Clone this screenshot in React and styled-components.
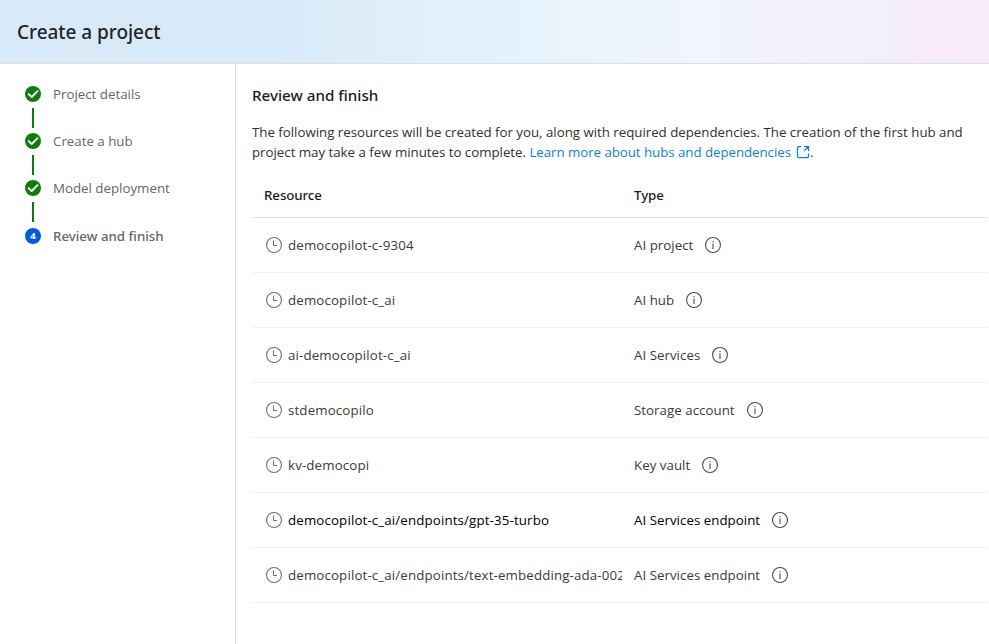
import React from "react";
import styled, { createGlobalStyle } from "styled-components";

const GlobalStyle = createGlobalStyle`
  *, *::before, *::after { box-sizing: border-box; }
  body { margin: 0; background: #fff; overflow: hidden; }
`;

const Page = styled.div`
  display: flex;
  flex-direction: column;
  height: 100vh;
  font-family: "Open Sans", "Noto Sans", sans-serif;
  font-size: 13.3px;
  line-height: 20px;
  color: #323130;
`;

const Header = styled.header`
  display: flex;
  align-items: center;
  flex: none;
  height: 64px;
  padding: 0 17px;
  border-bottom: 1px solid #dcdfe3;
  background: linear-gradient(
    90deg,
    #d8eaf8 0%,
    #d7eaf9 27%,
    #e0eef9 40%,
    #e4f2fb 50%,
    #ebf4fd 60%,
    #f1f6fd 70%,
    #f3f3fd 77%,
    #f4f1fb 83%,
    #f3eff8 91%,
    #f8ebf9 95%,
    #f8eaf9 100%
  );
`;

const Title = styled.h1`
  margin: 0;
  font: 500 19px/28px "Noto Sans", sans-serif;
  letter-spacing: -0.04px;
  color: #242424;
`;

const Body = styled.div`
  display: flex;
  flex: 1;
  min-height: 0;
`;

const Sidebar = styled.nav`
  flex: none;
  width: 236px;
  padding: 20px 0 0 25px;
  border-right: 1px solid #dfdfdf;
`;

const Step = styled.div`
  display: flex;
  align-items: center;
  gap: 12px;
  height: 20px;
  color: #666;
  font-family: ${(p) => (p.$current ? '"Noto Sans", sans-serif' : "inherit")};
  font-weight: ${(p) => (p.$current ? 500 : 400)};
`;

const Connector = styled.div`
  width: 2px;
  height: 20px;
  margin: ${(p) => (p.$last ? "4px 0 4px 7px" : "4px 0 3px 7px")};
  background: #107c10;
`;

const StepNumber = styled.span`
  display: grid;
  place-items: center;
  width: 16px;
  height: 16px;
  border-radius: 50%;
  background: #015cda;
  color: #fff;
  font: 700 9.5px/16px "Open Sans", sans-serif;
`;

const Main = styled.main`
  flex: 1;
  min-width: 0;
  padding: 20px 0 0 16px;
`;

const SectionTitle = styled.h2`
  margin: 0 0 16px;
  font: 500 15.2px/22px "Noto Sans", sans-serif;
  color: #1b1b1b;
`;

const Intro = styled.p`
  width: 725px;
  margin: 0;
  letter-spacing: -0.02px;
`;

const Link = styled.a`
  color: #0f7fd6;
  letter-spacing: -0.05px;
  text-decoration: none;
`;

const LinkIcon = styled.svg`
  margin-left: 5px;
  vertical-align: -2px;
`;

const Table = styled.div`
  margin-top: 11px;
`;

const Row = styled.div`
  display: grid;
  grid-template-columns: 370px 1fr;
  align-items: center;
  height: 55px;
  margin-right: 1px;
  padding-left: 12px;
  border-bottom: 1px solid #f0f0f0;
  color: ${(p) => (p.$active ? "#000" : "#3b3a39")};
`;

const HeadRow = styled(Row)`
  height: 45px;
  border-bottom-color: #e3e3e3;
  font-family: "Noto Sans", sans-serif;
  font-weight: 500;
  letter-spacing: -0.08px;
  color: #1b1b1b;
`;

const NameCell = styled.div`
  display: flex;
  align-items: center;
  gap: 6px;
  width: 358px;
  padding-left: 2px;
  overflow: hidden;
  white-space: nowrap;
  letter-spacing: 0.14px;
`;

const TypeCell = styled.div`
  display: flex;
  align-items: center;
  gap: 12px;
  letter-spacing: 0.03px;
`;

const Glyph = styled.svg`
  flex: none;
  display: block;
  color: ${(p) => (p.$dark ? "#4a4a4a" : "#707070")};
`;

const CheckIcon = () => (
  <Glyph width="16" height="16" viewBox="0 0 16 16">
    <circle cx="8" cy="8" r="8" fill="#107c10" />
    <path d="M3.6 8.1 6.7 11 12.5 5.2" fill="none" stroke="#fff" strokeWidth="1.9" strokeLinecap="round" strokeLinejoin="round" />
  </Glyph>
);

const ClockIcon = () => (
  <Glyph width="16" height="16" viewBox="0 0 16 16" fill="none" stroke="currentColor">
    <circle cx="8" cy="8" r="7.45" strokeWidth="1.1" />
    <path d="M7.5 3.5v5H11" />
  </Glyph>
);

const InfoIcon = () => (
  <Glyph $dark width="16" height="16" viewBox="0 0 16 16" fill="none" stroke="currentColor">
    <circle cx="8" cy="8" r="7.45" strokeWidth="1.1" />
    <path d="M8 6.5V12M8 4v1.2" strokeWidth="1.1" />
  </Glyph>
);

const ExternalIcon = () => (
  <LinkIcon width="14" height="14" viewBox="0 0 14 14" fill="none" stroke="currentColor" strokeWidth="1.25">
    <path d="M5 1.5H2.6A1.1 1.1 0 0 0 1.5 2.6v8.8a1.1 1.1 0 0 0 1.1 1.1h8.8a1.1 1.1 0 0 0 1.1-1.1V8.5M8 1.5h4.5V6M12.5 1.5 8 6" />
  </LinkIcon>
);

const completedSteps = ["Project details", "Create a hub", "Model deployment"];

const resources = [
  { name: "democopilot-c-9304", type: "AI project" },
  { name: "democopilot-c_ai", type: "AI hub" },
  { name: "ai-democopilot-c_ai", type: "AI Services" },
  { name: "stdemocopilo", type: "Storage account" },
  { name: "kv-democopi", type: "Key vault" },
  { name: "democopilot-c_ai/endpoints/gpt-35-turbo", type: "AI Services endpoint", active: true },
  { name: "democopilot-c_ai/endpoints/text-embedding-ada-002", type: "AI Services endpoint" },
];

export default function App() {
  return (
    <Page>
      <GlobalStyle />
      <Header>
        <Title>Create a project</Title>
      </Header>
      <Body>
        <Sidebar>
          {completedSteps.map((label, i) => (
            <React.Fragment key={label}>
              <Step>
                <CheckIcon />
                {label}
              </Step>
              <Connector $last={i === completedSteps.length - 1} />
            </React.Fragment>
          ))}
          <Step $current>
            <StepNumber>4</StepNumber>
            Review and finish
          </Step>
        </Sidebar>
        <Main>
          <SectionTitle>Review and finish</SectionTitle>
          <Intro>
            The following resources will be created for you, along with required dependencies. The creation of the
            first hub and project may take a few minutes to complete.{" "}
            <Link>
              Learn more about hubs and dependencies
              <ExternalIcon />
            </Link>
            .
          </Intro>
          <Table>
            <HeadRow>
              <span>Resource</span>
              <span>Type</span>
            </HeadRow>
            {resources.map(({ name, type, active }) => (
              <Row key={name} $active={active}>
                <NameCell>
                  <ClockIcon />
                  {name}
                </NameCell>
                <TypeCell>
                  {type}
                  <InfoIcon />
                </TypeCell>
              </Row>
            ))}
          </Table>
        </Main>
      </Body>
    </Page>
  );
}
